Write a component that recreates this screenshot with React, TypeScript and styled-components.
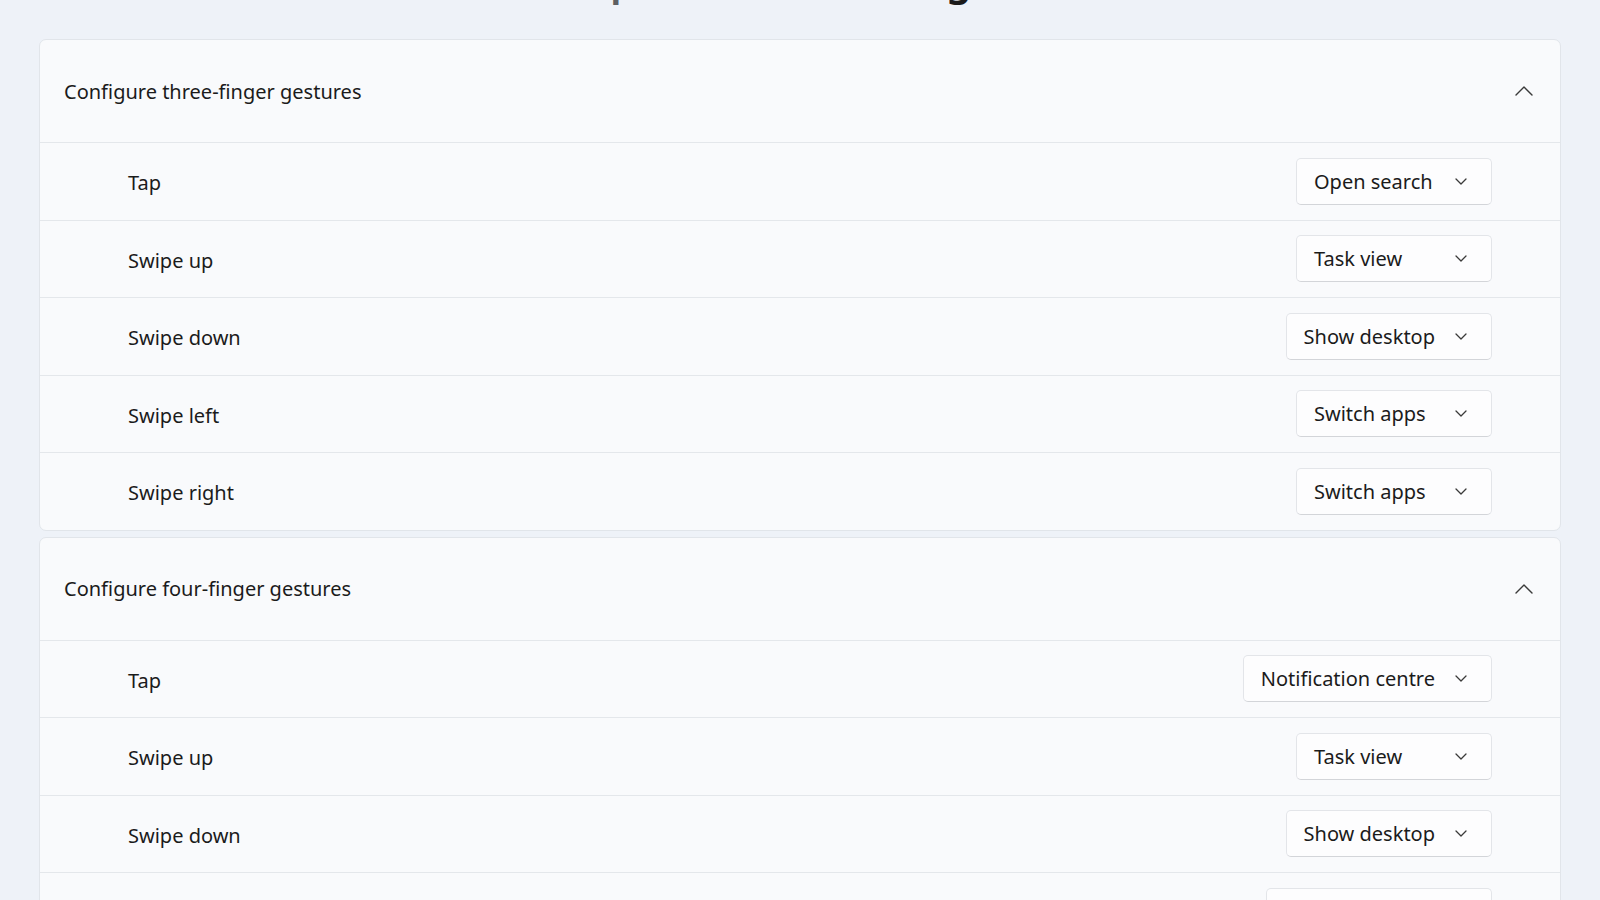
import React from "react";
import styled, { createGlobalStyle } from "styled-components";

const Global = createGlobalStyle`
  html, body { margin: 0; padding: 0; }
  body {
    background: #eef2f8;
    font-family: "Noto Sans", "Open Sans", sans-serif;
    color: #1b1b1b;
    overflow: hidden;
  }
`;

const Page = styled.div`
  width: 1600px;
  height: 900px;
  padding: 0 39px;
  box-sizing: border-box;
  display: flex;
  flex-direction: column;
  gap: 6px;
  overflow: hidden;
`;

const Breadcrumb = styled.div`
  display: flex;
  align-items: center;
  gap: 20px;
  height: 52px;
  margin-top: -47px;
  margin-bottom: 28px;
  font-size: 41px;
  font-weight: 600;
  line-height: 52px;
  white-space: nowrap;
`;

const Crumb = styled.span<{ $current?: boolean }>`
  color: ${(p) => (p.$current ? "#1b1b1b" : "#5d5f62")};
`;

const Card = styled.section`
  background: #f9fafc;
  border: 1px solid #e1e5ea;
  border-radius: 7px;
  display: flex;
  flex-direction: column;
  flex-shrink: 0;
`;

const CardHeader = styled.div`
  height: 102px;
  display: flex;
  align-items: center;
  justify-content: space-between;
  padding: 0 27px 0 24px;
  font-size: 20px;
`;

const Row = styled.div`
  height: 76.5px;
  border-top: 1px solid #e4e7eb;
  display: flex;
  align-items: center;
  justify-content: space-between;
  padding: 0 68px 0 88px;
  font-size: 20px;
`;

const Label = styled.span`
  padding-top: 3px;
`;

const Dropdown = styled.button`
  min-width: 196px;
  height: 47px;
  box-sizing: border-box;
  display: flex;
  align-items: center;
  justify-content: space-between;
  gap: 20px;
  padding: 0 24px 0 17px;
  background: #fdfdfe;
  border: 1px solid #e3e5e9;
  border-bottom-color: #d3d5d9;
  border-radius: 5px;
  font-family: inherit;
  font-size: 20px;
  color: #1b1b1b;
`;

const ChevronDown = () => (
  <svg width="12" height="7" viewBox="0 0 12 7" fill="none">
    <path d="M1 1l5 5 5-5" stroke="#3a3a3a" strokeWidth="1.3" strokeLinecap="round" strokeLinejoin="round" />
  </svg>
);

const ChevronUp = () => (
  <svg width="18" height="10" viewBox="0 0 18 10" fill="none">
    <path d="M1 9l8-8 8 8" stroke="#3a3a3a" strokeWidth="1.4" strokeLinecap="round" strokeLinejoin="round" />
  </svg>
);

const Sep = () => (
  <svg width="14" height="24" viewBox="0 0 14 24" fill="none">
    <path d="M3 2l9 10-9 10" stroke="#5d5f62" strokeWidth="2" strokeLinecap="round" strokeLinejoin="round" />
  </svg>
);

type Gesture = { label: string; value: string };

const three: Gesture[] = [
  { label: "Tap", value: "Open search" },
  { label: "Swipe up", value: "Task view" },
  { label: "Swipe down", value: "Show desktop" },
  { label: "Swipe left", value: "Switch apps" },
  { label: "Swipe right", value: "Switch apps" },
];

const four: Gesture[] = [
  { label: "Tap", value: "Notification centre" },
  { label: "Swipe up", value: "Task view" },
  { label: "Swipe down", value: "Show desktop" },
  { label: "Swipe left", value: "Switch desktops" },
  { label: "Swipe right", value: "Switch desktops" },
];

const Section = ({ title, items }: { title: string; items: Gesture[] }) => (
  <Card>
    <CardHeader>
      <span>{title}</span>
      <ChevronUp />
    </CardHeader>
    {items.map((g, i) => (
      <Row key={i}>
        <Label>{g.label}</Label>
        <Dropdown>
          <span>{g.value}</span>
          <ChevronDown />
        </Dropdown>
      </Row>
    ))}
  </Card>
);

export default function App() {
  return (
    <>
      <Global />
      <Page>
        <Breadcrumb>
          <Crumb>Bluetooth &amp; devices</Crumb>
          <Sep />
          <Crumb>Touchpad</Crumb>
          <Sep />
          <Crumb $current>Advanced gestures</Crumb>
        </Breadcrumb>
        <Section title="Configure three-finger gestures" items={three} />
        <Section title="Configure four-finger gestures" items={four} />
      </Page>
    </>
  );
}
